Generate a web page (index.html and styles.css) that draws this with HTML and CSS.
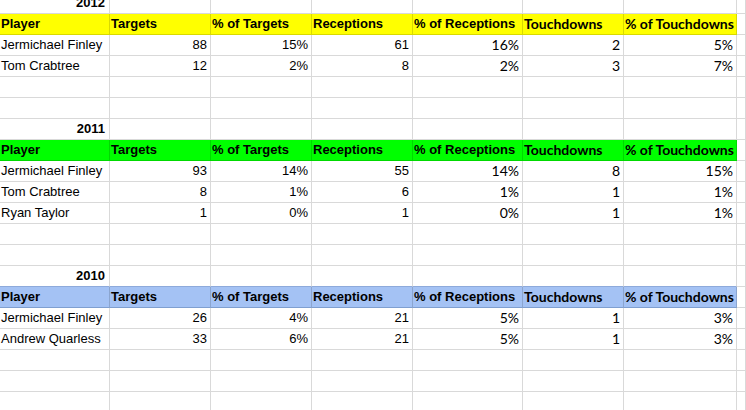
FILE: index.html
```html
<!DOCTYPE html>
<html>
<head>
<meta charset="utf-8">
<link rel="stylesheet" href="styles.css">
</head>
<body>
<div class="sheet">
  <div class="row"><div class="c title">2012</div><div class="c"></div><div class="c"></div><div class="c"></div><div class="c"></div><div class="c"></div><div class="c"></div><div class="c"></div></div>
  <div class="row head yellow"><div class="c">Player</div><div class="c">Targets</div><div class="c">% of Targets</div><div class="c">Receptions</div><div class="c">% of Receptions</div><div class="c cal">Touchdowns</div><div class="c cal">% of Touchdowns</div><div class="c blank"></div></div>
  <div class="row"><div class="c">Jermichael Finley</div><div class="c n">88</div><div class="c n">15%</div><div class="c n">61</div><div class="c n cal">16%</div><div class="c n cal">2</div><div class="c n cal">5%</div><div class="c"></div></div>
  <div class="row"><div class="c">Tom Crabtree</div><div class="c n">12</div><div class="c n">2%</div><div class="c n">8</div><div class="c n cal">2%</div><div class="c n cal">3</div><div class="c n cal">7%</div><div class="c"></div></div>
  <div class="row"><div class="c"></div><div class="c"></div><div class="c"></div><div class="c"></div><div class="c"></div><div class="c"></div><div class="c"></div><div class="c"></div></div>
  <div class="row"><div class="c"></div><div class="c"></div><div class="c"></div><div class="c"></div><div class="c"></div><div class="c"></div><div class="c"></div><div class="c"></div></div>

  <div class="row"><div class="c title">2011</div><div class="c"></div><div class="c"></div><div class="c"></div><div class="c"></div><div class="c"></div><div class="c"></div><div class="c"></div></div>
  <div class="row head green"><div class="c">Player</div><div class="c">Targets</div><div class="c">% of Targets</div><div class="c">Receptions</div><div class="c">% of Receptions</div><div class="c cal">Touchdowns</div><div class="c cal">% of Touchdowns</div><div class="c blank"></div></div>
  <div class="row"><div class="c">Jermichael Finley</div><div class="c n">93</div><div class="c n">14%</div><div class="c n">55</div><div class="c n cal">14%</div><div class="c n cal">8</div><div class="c n cal">15%</div><div class="c"></div></div>
  <div class="row"><div class="c">Tom Crabtree</div><div class="c n">8</div><div class="c n">1%</div><div class="c n">6</div><div class="c n cal">1%</div><div class="c n cal">1</div><div class="c n cal">1%</div><div class="c"></div></div>
  <div class="row"><div class="c">Ryan Taylor</div><div class="c n">1</div><div class="c n">0%</div><div class="c n">1</div><div class="c n cal">0%</div><div class="c n cal">1</div><div class="c n cal">1%</div><div class="c"></div></div>
  <div class="row"><div class="c"></div><div class="c"></div><div class="c"></div><div class="c"></div><div class="c"></div><div class="c"></div><div class="c"></div><div class="c"></div></div>
  <div class="row"><div class="c"></div><div class="c"></div><div class="c"></div><div class="c"></div><div class="c"></div><div class="c"></div><div class="c"></div><div class="c"></div></div>

  <div class="row pre-blue"><div class="c title">2010</div><div class="c"></div><div class="c"></div><div class="c"></div><div class="c"></div><div class="c"></div><div class="c"></div><div class="c"></div></div>
  <div class="row head blue"><div class="c">Player</div><div class="c">Targets</div><div class="c">% of Targets</div><div class="c">Receptions</div><div class="c">% of Receptions</div><div class="c cal">Touchdowns</div><div class="c cal">% of Touchdowns</div><div class="c blank"></div></div>
  <div class="row"><div class="c">Jermichael Finley</div><div class="c n">26</div><div class="c n">4%</div><div class="c n">21</div><div class="c n cal">5%</div><div class="c n cal">1</div><div class="c n cal">3%</div><div class="c"></div></div>
  <div class="row"><div class="c">Andrew Quarless</div><div class="c n">33</div><div class="c n">6%</div><div class="c n">21</div><div class="c n cal">5%</div><div class="c n cal">1</div><div class="c n cal">3%</div><div class="c"></div></div>
  <div class="row"><div class="c"></div><div class="c"></div><div class="c"></div><div class="c"></div><div class="c"></div><div class="c"></div><div class="c"></div><div class="c"></div></div>
  <div class="row"><div class="c"></div><div class="c"></div><div class="c"></div><div class="c"></div><div class="c"></div><div class="c"></div><div class="c"></div><div class="c"></div></div>
  <div class="row"><div class="c"></div><div class="c"></div><div class="c"></div><div class="c"></div><div class="c"></div><div class="c"></div><div class="c"></div><div class="c"></div></div>
</div>
</body>
</html>
```

FILE: styles.css
```css
html, body {
  margin: 0;
  padding: 0;
  background: #ffffff;
  overflow: hidden;
  height: 410px;
}

.sheet {
  margin-top: -7px;
  font-family: "Liberation Sans", Arial, sans-serif;
  font-size: 13px;
  color: #000000;
}

.row {
  display: grid;
  grid-template-columns: 110px 101px 101px 101px 110px 101px 113px 1fr;
  height: 21px;
}

.c {
  box-sizing: border-box;
  height: 21px;
  line-height: 20px;
  padding: 0 3px 0 1px;
  border-right: 1px solid rgba(0, 0, 0, 0.15);
  border-bottom: 1px solid rgba(0, 0, 0, 0.15);
  white-space: nowrap;
  overflow: hidden;
}

.c.n {
  text-align: right;
}

.c.cal {
  font-family: Lato, "Liberation Sans", sans-serif;
  font-size: 14px;
}

.title {
  font-weight: bold;
  text-align: right;
  padding-right: 4px;
}

.head .c,
.head .c.cal {
  font-weight: 700;
}

.yellow .c { background: #ffff00; }
.green .c { background: #00ff00; }
.blue .c { background: #a4c2f4; }
.head .c.blank { background: #ffffff; }

.pre-blue .c:not(:last-child) {
  border-bottom-color: #8eaadb;
}
.blue .c:not(.blank) {
  border-bottom-color: #7f9fd0;
}
```
